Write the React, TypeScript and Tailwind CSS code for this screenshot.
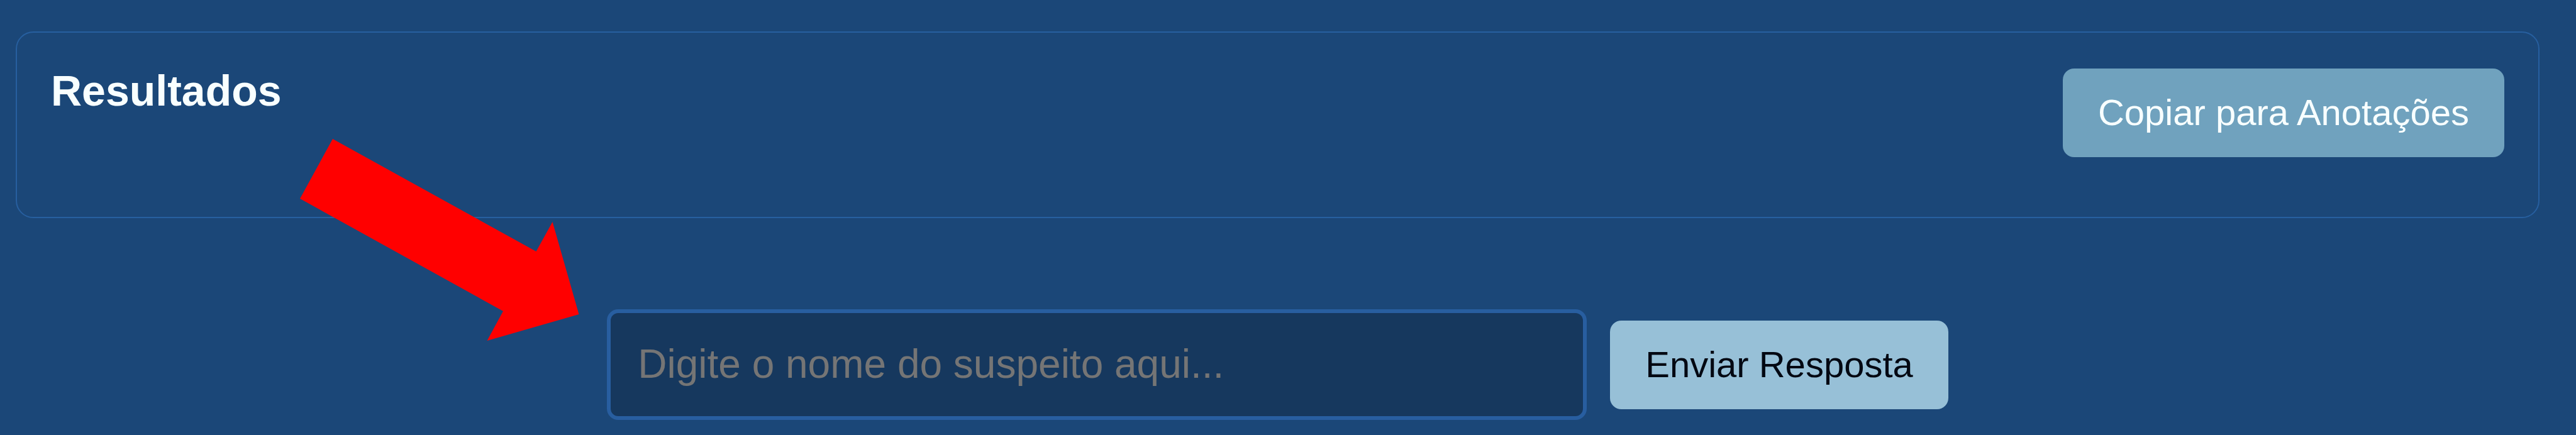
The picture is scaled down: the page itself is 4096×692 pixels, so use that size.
function Arrow() {
  return (
    <svg
      aria-hidden="true"
      className="pointer-events-none absolute top-[221px] left-[477px] h-[321px] w-[444px]"
      viewBox="0 0 444 321"
    >
      <polygon fill="#ff0000" points="52,0 0,95 323,274 297.5,321 443.5,279 401.5,132 375.5,179" />
    </svg>
  );
}

function ResultsPanel() {
  return (
    <section className="rounded-[28px] border-2 border-[#275f9f] px-[54px] pt-[57px] pb-[54px]">
      <header className="mb-[41px] flex items-start justify-between">
        <h2 className="text-[68px] leading-[71px] font-bold text-[#f8ffff]">Resultados</h2>
        <button
          type="button"
          className="rounded-[18px] bg-[#70a2be] px-14 pt-[35px] pb-[37px] text-[58px] leading-[69px] text-[#f8ffff]"
        >
          Copiar para Anotações
        </button>
      </header>
    </section>
  );
}

function AnswerForm() {
  return (
    <form
      className="mt-[145px] flex items-center justify-center gap-[37px]"
      onSubmit={(event) => event.preventDefault()}
    >
      <input
        type="text"
        aria-label="Nome do suspeito"
        placeholder="Digite o nome do suspeito aqui..."
        className="w-[1558px] rounded-[18px] border-[6px] border-[#285ea0] bg-[#16385e] px-[43px] pt-[43px] pb-[45px] text-[64px] leading-[76px] text-[#f8ffff] placeholder:text-[#757575]"
      />
      <button
        type="submit"
        className="rounded-[18px] bg-[#97c0d7] px-14 pt-[35px] pb-[37px] text-[58px] leading-[69px] text-[#030812]"
      >
        Enviar Resposta
      </button>
    </form>
  );
}

export default function App() {
  return (
    <main className="relative min-h-screen bg-[#1b4778] pt-[50px] pr-[58px] pb-5 pl-[25px] font-['Liberation_Sans',Arial,sans-serif]">
      <ResultsPanel />
      <AnswerForm />
      <Arrow />
    </main>
  );
}
